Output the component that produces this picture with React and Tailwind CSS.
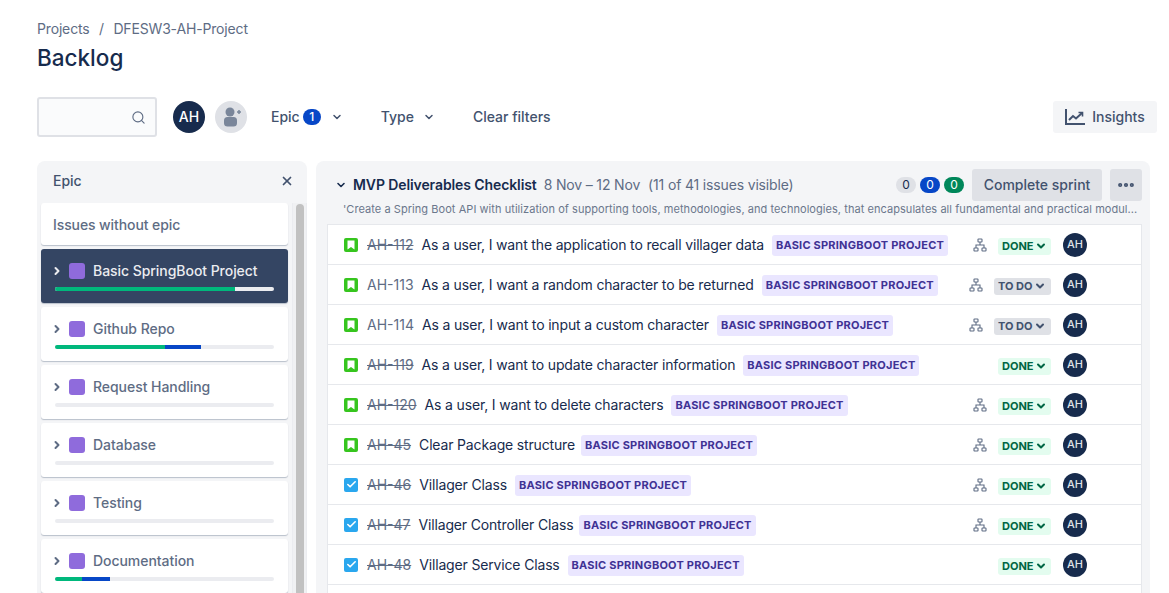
import { ChevronDown, ChevronRight, Search, X, Check, MoreHorizontal } from "lucide-react";

const epics = [
  { name: "Basic SpringBoot Project", green: 82, blue: 0, active: true },
  { name: "Github Repo", green: 50, blue: 16.5 },
  { name: "Request Handling", green: 0, blue: 0 },
  { name: "Database", green: 0, blue: 0 },
  { name: "Testing", green: 0, blue: 0 },
  { name: "Documentation", green: 12.3, blue: 12.8 },
];

const issues = [
  { id: "AH-112", title: "As a user, I want the application to recall villager data", type: "story", done: true, tree: true, tagGap: "ml-2" },
  { id: "AH-113", title: "As a user, I want a random character to be returned", type: "story", done: false, tree: true, tagGap: "ml-2" },
  { id: "AH-114", title: "As a user, I want to input a custom character", type: "story", done: false, tree: true, tagGap: "ml-2" },
  { id: "AH-119", title: "As a user, I want to update character information", type: "story", done: true, tree: false, tagGap: "ml-2" },
  { id: "AH-120", title: "As a user, I want to delete characters", type: "story", done: true, tree: true, tagGap: "ml-2" },
  { id: "AH-45", title: "Clear Package structure", type: "story", done: true, tree: true, tagGap: "ml-[6px]" },
  { id: "AH-46", title: "Villager Class", type: "task", done: true, tree: true, tagGap: "ml-2" },
  { id: "AH-47", title: "Villager Controller Class", type: "task", done: true, tree: true, tagGap: "ml-[6px]" },
  { id: "AH-48", title: "Villager Service Class", type: "task", done: true, tree: false, tagGap: "ml-2" },
];

function Avatar({ small }) {
  return (
    <div className={small
      ? "w-6 h-6 rounded-full bg-[#172b4d] text-[#dfe1e6] text-[11px] font-medium flex items-center justify-center"
      : "w-8 h-8 rounded-full bg-[#172b4d] text-white text-sm font-medium flex items-center justify-center"}>
      AH
    </div>
  );
}

// Epic card in the left panel
function EpicCard({ epic }) {
  return (
    <div className={`h-[54px] rounded-[3px] px-[14px] pt-[14px] shadow-[0_1px_1px_#091e4240] ${epic.active ? "bg-[#344563] text-[#ebecf0]" : "bg-white text-[#5e6c84]"}`}>
      <div className="flex items-center h-4">
        <ChevronRight size={12} strokeWidth={4} className={`-ml-[4px] ${epic.active ? "text-[#ebecf0]" : "text-[#5e6c84]"}`} />
        <div className="w-4 h-4 rounded-[3px] bg-[#8f6bdc] ml-[6px]" />
        <span className="ml-2 text-sm font-medium leading-4 tracking-[-0.05px]">{epic.name}</span>
      </div>
      <div className="flex h-1 mt-2 rounded-full overflow-hidden bg-[#ebecf0]">
        <div className="bg-[#00b87c]" style={{ width: `${epic.green}%` }} />
        <div className="bg-[#0747c7]" style={{ width: `${epic.blue}%` }} />
      </div>
    </div>
  );
}

function IssueIcon({ type }) {
  if (type === "task") {
    return (
      <div className="w-[14px] h-[14px] rounded-[2px] bg-[#2aa7ee] flex items-center justify-center">
        <Check size={11} strokeWidth={3.5} className="text-white" />
      </div>
    );
  }
  return (
    <div className="w-[14px] h-[14px] rounded-[2px] bg-[#36c51e] flex items-center justify-center">
      <svg width="8" height="10" viewBox="0 0 8 10">
        <path d="M0.5 0.5h7v9L4 7 0.5 9.5z" fill="#fff" />
      </svg>
    </div>
  );
}

// Child issues icon: one box on top, two below
function TreeIcon({ className }) {
  return (
    <svg width="14" height="14" viewBox="0 0 14 14" fill="none" stroke="#5e6c84" strokeWidth="1.1" className={className}>
      <rect x="5" y="1" width="4" height="3" rx="0.6" />
      <rect x="1" y="10" width="4" height="3" rx="0.6" />
      <rect x="9" y="10" width="4" height="3" rx="0.6" />
      <path d="M7 4v3M3 10V7h8v3" />
    </svg>
  );
}

// Single backlog row
function IssueRow({ issue }) {
  return (
    <div className="h-10 flex items-center pl-4 pr-[54px] border-b border-[#e6e8ec] bg-white">
      <IssueIcon type={issue.type} />
      <span className={`ml-[9px] text-sm text-[#5e6c84] ${issue.done ? "line-through" : ""}`}>{issue.id}</span>
      <span className="ml-2 text-sm text-[#172b4d] tracking-[-0.16px]">{issue.title}</span>
      <span className={`${issue.tagGap} mt-[2px] h-[21px] px-[4px] rounded-[3px] bg-[#eae6ff] text-[#403294] text-[11px] font-bold tracking-[0.22px] flex items-center`}>
        BASIC SPRINGBOOT PROJECT
      </span>
      <div className="ml-auto flex items-center">
        {issue.tree && <TreeIcon className="mr-[11px]" />}
        {issue.done ? (
          <span className="mt-[3px] h-[17px] w-[53px] rounded-[3px] bg-[#e3fcef] text-[#006644] text-[11px] font-bold flex items-center pl-1">
            DONE<ChevronDown size={12} strokeWidth={4} className="ml-[1px]" />
          </span>
        ) : (
          <span className="mt-[3px] h-[17px] w-[57px] rounded-[3px] bg-[#dfe1e6] text-[#42526e] text-[11px] font-bold flex items-center pl-1">
            TO DO<ChevronDown size={12} strokeWidth={4} className="ml-[1px]" />
          </span>
        )}
        <div className="ml-3"><Avatar small /></div>
      </div>
    </div>
  );
}

export default function App() {
  return (
    <div className="h-[593px] w-[1169px] overflow-hidden bg-white font-['Inter',sans-serif] pl-[37px] pr-[12px] pt-[20px]">
      <div className="flex items-center h-[18px] text-sm text-[#5e6c84] tracking-[-0.16px]">
        <span>Projects</span>
        <span className="mx-[9.5px]">/</span>
        <span>DFESW3-AH-Project</span>
      </div>
      <h1 className="mt-[6px] text-[22.5px] leading-7 font-medium text-[#172b4d]">Backlog</h1>

      {/* Filter bar */}
      <div className="mt-[25px] h-10 flex items-center text-sm font-medium text-[#42526e]">
        <div className="w-[120px] h-10 rounded-[3px] border-2 border-[#dfe1e6] bg-[#fafbfc] flex items-center justify-end pr-[9px]">
          <Search size={15} strokeWidth={1.8} className="text-[#5e6c84]" />
        </div>
        <div className="ml-4"><Avatar /></div>
        <div className="ml-[10px] w-8 h-8 rounded-full bg-[#dfe1e6]">
          <svg width="32" height="32" viewBox="0 0 32 32">
            <circle cx="15" cy="11" r="4.5" fill="#7a869a" />
            <rect x="9" y="16" width="13" height="9.5" rx="3.5" fill="#7a869a" />
            <path d="M22 11h4M24 9v4" stroke="#7a869a" strokeWidth="1.5" />
          </svg>
        </div>
        <span className="ml-6">Epic</span>
        <span className="ml-[3px] w-[18px] h-4 rounded-full bg-[#0747c7] text-white text-xs flex items-center justify-center">1</span>
        <ChevronDown size={12} strokeWidth={3} className="ml-[10px]" />
        <span className="ml-[38px]">Type</span>
        <ChevronDown size={12} strokeWidth={3} className="ml-[9px]" />
        <span className="ml-[38px]">Clear filters</span>
        <div className="ml-auto w-[104px] h-8 rounded-[3px] bg-[#f4f5f7] flex items-center justify-center gap-[7px]">
          <svg width="20" height="16" viewBox="0 0 20 16" fill="none" stroke="currentColor" strokeWidth="2">
            <path d="M1 0v15h19" />
            <path d="M4 11l4-4 3 2.5L17 4" />
            <path d="M13.5 3.5H17.5V7.5" strokeWidth="1.6" />
          </svg>
          <span>Insights</span>
        </div>
      </div>

      <div className="mt-[24px] flex gap-[9px] items-start">
        {/* Epic panel */}
        <div className="w-[270px] h-[440px] rounded-t-lg bg-[#f4f5f7]">
          <div className="h-[42px] pb-[2px] flex items-center justify-between pl-4 pr-[13px] text-sm font-medium text-[#42526e]">
            <span>Epic</span>
            <X size={14} strokeWidth={3} />
          </div>
          <div className="flex">
            <div className="w-[247px] ml-1 flex flex-col gap-1">
              <div className="h-[42px] pt-[1px] rounded-[3px] bg-white shadow-[0_1px_1px_#091e4240] flex items-center px-3 text-sm font-medium text-[#5e6c84] tracking-[-0.1px]">
                Issues without epic
              </div>
              {epics.map((epic) => (
                <EpicCard key={epic.name} epic={epic} />
              ))}
            </div>
            <div className="ml-[4px] w-[15px] bg-[#f0f1f3] border-x border-[#ebecf0] flex justify-center">
              <div className="w-2 h-[400px] mt-[1px] rounded-t bg-[#c1c1c1]" />
            </div>
          </div>
        </div>

        {/* Sprint panel */}
        <div className="w-[834px] h-[440px] rounded-t-lg bg-[#f4f5f7] pl-[11px] pr-2">
          <div className="h-10 pt-2 flex items-center">
            <ChevronDown size={12} strokeWidth={3.2} className="ml-[8px] text-[#172b4d]" />
            <span className="ml-[6px] text-sm font-semibold text-[#172b4d] tracking-[-0.1px]">MVP Deliverables Checklist</span>
            <span className="ml-[7px] text-sm text-[#5e6c84] tracking-[-0.16px]">8 Nov – 12 Nov</span>
            <span className="ml-2 text-sm text-[#5e6c84] tracking-[-0.16px]">(11 of 41 issues visible)</span>
            <div className="ml-auto flex items-center text-xs gap-1">
              <span className="w-5 h-4 rounded-full bg-[#dfe1e6] text-[#172b4d] flex items-center justify-center">0</span>
              <span className="w-5 h-4 rounded-full bg-[#0747c7] text-white flex items-center justify-center">0</span>
              <span className="w-5 h-4 rounded-full bg-[#00875a] text-white flex items-center justify-center">0</span>
            </div>
            <div className="ml-2 w-[130px] h-8 rounded-[3px] bg-[#dfe1e6] text-sm font-medium text-[#42526e] flex items-center justify-center">
              Complete sprint
            </div>
            <div className="ml-2 w-8 h-8 rounded-[3px] bg-[#dfe1e6] flex items-center justify-center text-[#42526e]">
              <MoreHorizontal size={20} strokeWidth={3} />
            </div>
          </div>
          <div className="mt-[1px] h-[15px] pl-4 text-[11px] leading-[15px] text-[#6b778c] whitespace-nowrap tracking-[0.055px]">
            'Create a Spring Boot API with utilization of supporting tools, methodologies, and technologies, that encapsulates all fundamental and practical modul...
          </div>
          <div className="mt-[7px] border-x border-t border-[#e6e8ec] bg-white">
            {issues.map((issue) => (
              <IssueRow key={issue.id} issue={issue} />
            ))}
            <div className="h-10" />
          </div>
        </div>
      </div>
    </div>
  );
}
